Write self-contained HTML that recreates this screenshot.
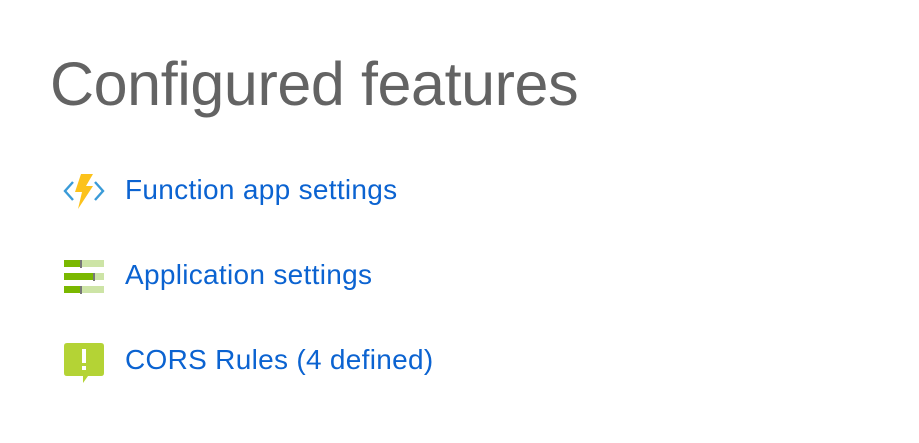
<!DOCTYPE html>
<html><head><style>
body{margin:0;width:919px;height:443px;background:#fff;font-family:"Liberation Sans",sans-serif;position:relative;overflow:hidden}
h1{position:absolute;left:50px;top:49px;margin:0;font-weight:normal;font-size:61px;color:#636363;line-height:70px;letter-spacing:-0.4px;white-space:nowrap}
.l{position:absolute;left:125px;font-size:28px;color:#0b63d1;line-height:30px;letter-spacing:0.3px;white-space:nowrap}
svg{position:absolute}
</style></head><body>
<h1>Configured features</h1>
<svg style="left:62px;top:172px" width="44" height="40" viewBox="0 0 44 40">
<path d="M11 10 L3 19 L11 28" fill="none" stroke="#3a9bd8" stroke-width="2.4"/>
<path d="M33 10 L41 19 L33 28" fill="none" stroke="#3a9bd8" stroke-width="2.4"/>
<path d="M19 2 H31 L24 14 H31 L16 37 L20 20 H13 Z" fill="#fcc21b"/>
</svg>
<svg style="left:64px;top:260px" width="40" height="34" viewBox="0 0 40 34">
<rect x="0" y="0" width="40" height="7" fill="#cde4a6"/><rect x="0" y="0" width="16" height="7" fill="#7ab800"/><rect x="16" y="0" width="2" height="8" fill="#777"/>
<rect x="0" y="13" width="40" height="7" fill="#cde4a6"/><rect x="0" y="13" width="29" height="7" fill="#7ab800"/><rect x="29" y="13" width="2" height="8" fill="#777"/>
<rect x="0" y="26" width="40" height="7" fill="#cde4a6"/><rect x="0" y="26" width="16" height="7" fill="#7ab800"/><rect x="16" y="26" width="2" height="8" fill="#777"/>
</svg>
<svg style="left:64px;top:343px" width="40" height="41" viewBox="0 0 40 41">
<path d="M3 0 H37 Q40 0 40 3 V30 Q40 33 37 33 H24 L19 40 L19 33 H3 Q0 33 0 30 V3 Q0 0 3 0 Z" fill="#b4d335"/>
<rect x="18" y="6" width="4" height="14" fill="#fff"/><rect x="18" y="23" width="4" height="4" fill="#fff"/>
</svg>
<div class="l" style="top:175px">Function app settings</div>
<div class="l" style="top:260px">Application settings</div>
<div class="l" style="top:345px">CORS Rules (4 defined)</div>
</body></html>
